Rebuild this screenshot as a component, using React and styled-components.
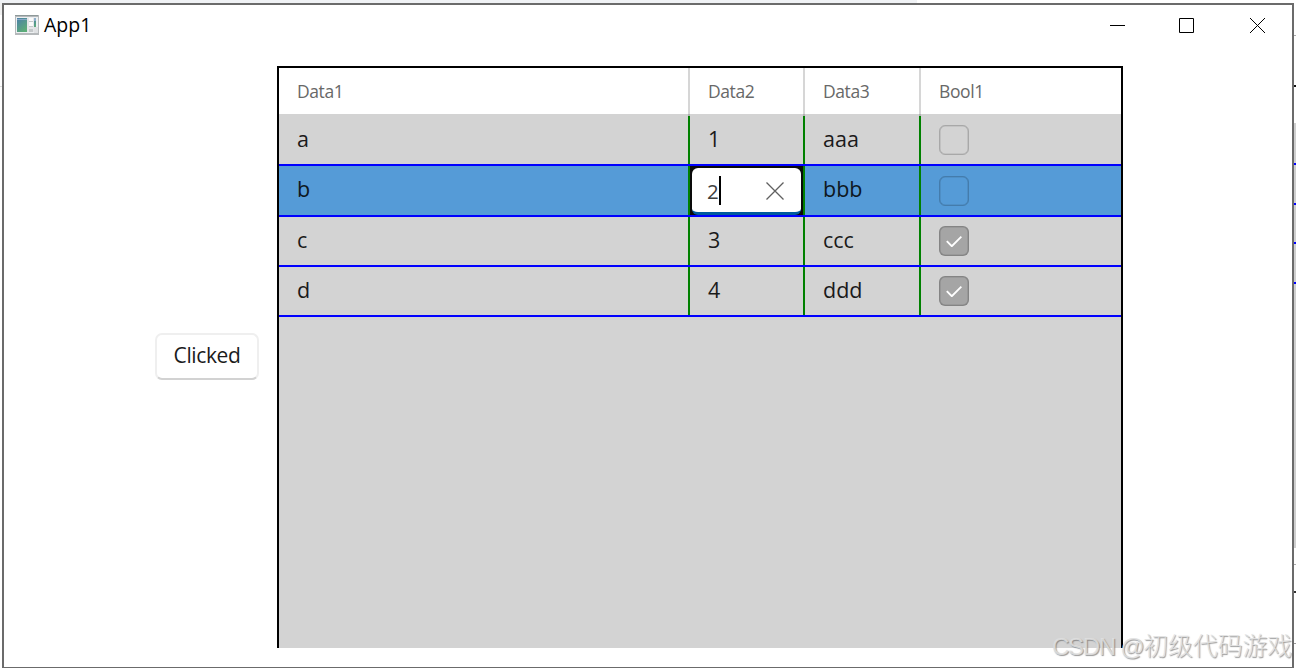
import React from "react";
import styled, { createGlobalStyle } from "styled-components";

const GlobalStyle = createGlobalStyle`
  * {
    box-sizing: border-box;
  }

  body {
    margin: 0;
    overflow: hidden;
    font-family: "Open Sans", "Noto Sans", sans-serif;
  }
`;

const Desktop = styled.div`
  display: grid;
  grid-template-columns: 2px 1292px 2px;
  grid-template-rows: 3px 665px;
  width: 1296px;
  height: 668px;
  overflow: hidden;
  background: #fff;
`;

const Behind = styled.div`
  grid-column: 1 / -1;
  background: linear-gradient(to right, #f0f2f5 917px, #fff 917px);
`;

const LeftEdge = styled.div`
  background: linear-gradient(
    #f0f0f0 12px,
    #fff 12px 83px,
    #ddd 83px 84px,
    #fff 84px
  );
`;

const RightEdge = styled.div`
  background: linear-gradient(
    #fff 32px,
    #aaa 32px 33px,
    #fff 33px 82px,
    #111 82px 84px,
    #fff 84px 120px,
    #cfcfcf 120px 160px,
    #00f 160px 162px,
    #cfcfcf 162px 200px,
    #00f 200px 202px,
    #cfcfcf 202px 239px,
    #00f 239px 241px,
    #cfcfcf 241px 279px,
    #00f 279px 281px,
    #cfcfcf 281px 545px,
    #fff 545px 561px,
    #aaa 561px 562px,
    #fff 562px 588px,
    #333 588px 590px,
    #fff 590px 640px,
    #999 640px 641px,
    #fff 641px
  );
`;

const Window = styled.main`
  display: flex;
  flex-direction: column;
  border: 2px solid #6b6b6b;
  border-bottom-width: 1px;
  background: #fff;
`;

const TitleBar = styled.header`
  display: flex;
  align-items: center;
  height: 43px;
  padding: 0 0 4px 11px;
`;

const WindowTitle = styled.h1`
  flex: 1;
  margin: 0 0 0 5px;
  font-size: 19.5px;
  line-height: 24px;
  font-weight: 400;
  letter-spacing: 0;
  color: #000;
`;

const Captions = styled.div`
  display: flex;
  gap: 54px;
  padding-right: 27px;
`;

const Content = styled.div`
  display: flex;
  align-items: flex-start;
  padding: 18px 0 0 151px;
`;

const Button = styled.button`
  width: 104px;
  height: 47px;
  margin: 267px 18px 0 0;
  padding: 0 0 3px;
  border: 2px solid #efefef;
  border-bottom-color: #d2d2d2;
  border-radius: 7px;
  background: #fff;
  font: 400 21px/30px "Open Sans", sans-serif;
  letter-spacing: -0.4px;
  color: #1b1b1b;
`;

const Grid = styled.section`
  width: 846px;
  height: 582px;
  border: 2px solid #000;
  border-bottom: 0;
  background: #d3d3d3;
`;

const Columns = styled.div`
  display: grid;
  grid-template-columns: 411px 115px 116px 200px;
`;

const HeaderRow = styled(Columns)`
  height: 48px;
  background: linear-gradient(#fff 46px, #d3d3d3 46px);
`;

const HeaderCell = styled.div`
  padding: 10px 0 0 18px;
  border-right: 2px solid rgba(0, 0, 0, 0.16);
  font-size: 17.5px;
  line-height: 26px;
  letter-spacing: -0.4px;
  color: #686868;

  &:last-child {
    border-right: 0;
  }
`;

const Row = styled(Columns)`
  height: ${props => (props.$selected ? 51 : 50)}px;
  border-bottom: 2px solid #00f;
  background: ${props => (props.$selected ? "#559bd7" : "transparent")};
`;

const Cell = styled.div`
  display: flex;
  align-items: flex-start;
  min-width: 0;
  padding: ${props => (props.$editing ? "0" : "8px 0 0 18px")};
  border-right: 2px solid #008000;
  font-size: 21.5px;
  line-height: 30px;
  letter-spacing: 0;
  color: ${props => (props.$selected ? "#0e1822" : "#1a1a1a")};

  &:last-child {
    border-right: 0;
  }
`;

const Editor = styled.div`
  flex: 1;
  height: 49px;
  padding: 2px;
  background: #0a0a0a;
`;

const EditorField = styled.div`
  display: flex;
  align-items: center;
  height: 47px;
  padding: 2px 17px 0 15px;
  border-bottom: 3px solid #005a9e;
  border-radius: 6px;
  background: #fff;
`;

const EditorValue = styled.span`
  font-size: 20.5px;
  line-height: 30px;
  color: #404040;
`;

const Caret = styled.span`
  width: 2px;
  height: 29px;
  margin: 0 auto 2px 0;
  background: #000;
`;

const Check = styled.span`
  display: grid;
  place-items: center;
  width: 30px;
  height: 30px;
  margin-top: ${props => props.$top}px;
  border: 1px solid rgba(0, 0, 0, 0.2);
  box-shadow: inset 0 0 0 0.6px rgba(0, 0, 0, 0.14);
  border-radius: 6px;
  background: ${props => (props.$checked ? "#a5a5a5" : "transparent")};
`;

const Watermark = styled.div`
  position: absolute;
  left: 1052px;
  top: 626px;
  font: 300 24.8px/36px "Noto Sans CJK SC", sans-serif;
  white-space: nowrap;
  color: rgba(225, 225, 225, 0.85);
  text-shadow: 1px 1px 1px rgba(110, 110, 110, 0.7);
`;

const Site = styled.span`
  font-family: "Liberation Sans", sans-serif;
  font-size: 24px;
  letter-spacing: -1.3px;
`;

const AppIcon = () => (
  <svg width="24" height="20" viewBox="0 0 24 20">
    <defs>
      <linearGradient id="pane" x1="0" y1="0" x2="0.6" y2="1">
        <stop offset="0" stopColor="#4c7fa9" />
        <stop offset="1" stopColor="#5cac78" />
      </linearGradient>
    </defs>
    <path d="M0 0h24v20H0z" fill="#b5b9bb" />
    <path d="M1 2h22v16H1z" fill="#edf0f2" />
    <path d="M0 0h23v1H0z" fill="#8e9999" />
    <path d="M2 3h10v14H2z" fill="url(#pane)" />
    <path d="M2 4h10v1H2z" fill="#86a8c6" />
    <path d="M12 3h7v14h-7z" fill="#e4e6e8" />
    <path d="M14 3h4v3h-4zM14 7h4v4h-4z" fill="#fafafa" />
    <path d="M14 6h4v1h-4zM14 11h4v1h-4zM14 14h4v3h-4z" fill="#c4c8ca" />
    <path d="M19 4h2v8h-2z" fill="url(#pane)" />
    <path d="M19 3h2v3h-2z" fill="#8fb0cc" />
    <path d="M19 12h4v6h-4z" fill="#dfe1e3" />
  </svg>
);

const CaptionIcon = ({ d }) => (
  <svg width="16" height="16" viewBox="0 0 16 16">
    <path d={d} fill="none" stroke="#000" />
  </svg>
);

const ClearIcon = () => (
  <svg width="18" height="18" viewBox="0 0 18 18">
    <path d="M.5.5l17 17M17.5.5l-17 17" stroke="#606060" strokeWidth="1.3" />
  </svg>
);

const CheckMark = () => (
  <svg width="16" height="12" viewBox="0 0 16 12">
    <path
      d="M.8 6.2l5 5L15.4 1.6"
      fill="none"
      stroke="#fff"
      strokeWidth="1.9"
    />
  </svg>
);

const headers = ["Data1", "Data2", "Data3", "Bool1"];

const rows = [
  { data1: "a", data2: "1", data3: "aaa", bool1: false },
  { data1: "b", data2: "2", data3: "bbb", bool1: false, selected: true },
  { data1: "c", data2: "3", data3: "ccc", bool1: true },
  { data1: "d", data2: "4", data3: "ddd", bool1: true }
];

const DataRow = ({ data1, data2, data3, bool1, selected }) => (
  <Row $selected={selected}>
    <Cell $selected={selected}>{data1}</Cell>
    <Cell $editing={selected}>
      {selected ? (
        <Editor>
          <EditorField>
            <EditorValue>{data2}</EditorValue>
            <Caret />
            <ClearIcon />
          </EditorField>
        </Editor>
      ) : (
        data2
      )}
    </Cell>
    <Cell $selected={selected}>{data3}</Cell>
    <Cell>
      <Check $checked={bool1} $top={selected ? 2 : 1}>
        {bool1 && <CheckMark />}
      </Check>
    </Cell>
  </Row>
);

const App = () => (
  <>
    <GlobalStyle />
    <Desktop>
      <Behind />
      <LeftEdge />
      <Window>
        <TitleBar>
          <AppIcon />
          <WindowTitle>App1</WindowTitle>
          <Captions>
            <CaptionIcon d="M1 8.5h15" />
            <CaptionIcon d="M.5 1.5h14v14H.5z" />
            <CaptionIcon d="M1 1l15 15M16 1l-15 15" />
          </Captions>
        </TitleBar>
        <Content>
          <Button>Clicked</Button>
          <Grid>
            <HeaderRow>
              {headers.map(name => (
                <HeaderCell key={name}>{name}</HeaderCell>
              ))}
            </HeaderRow>
            {rows.map(row => (
              <DataRow key={row.data1} {...row} />
            ))}
          </Grid>
        </Content>
      </Window>
      <RightEdge />
    </Desktop>
    <Watermark>
      <Site>CSDN @</Site>初级代码游戏
    </Watermark>
  </>
);

export default App;
